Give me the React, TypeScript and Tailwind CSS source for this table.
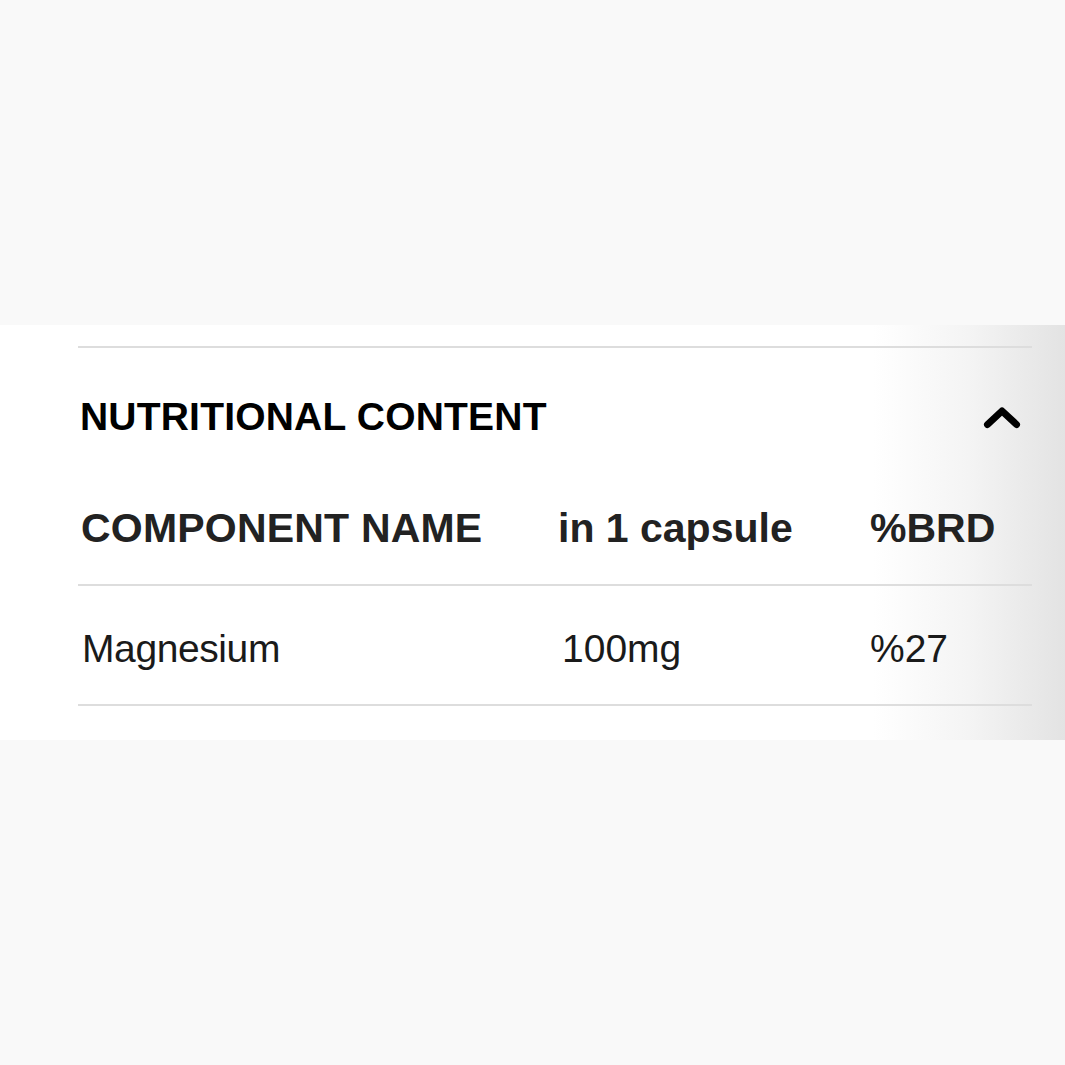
import React from "react";

function Chevron() {
  return (
    <svg width="38" height="26" viewBox="0 0 38 26" fill="none">
      <path d="M4.5 20.5 L19 7 L33.5 20.5" stroke="#000" strokeWidth="7" strokeLinecap="round" strokeLinejoin="round" />
    </svg>
  );
}

export default function App() {
  const font = { fontFamily: '"Liberation Sans", Arial, sans-serif' };
  return (
    <div className="w-[1065px] h-[1065px] bg-[#f9f9f9] flex flex-col" style={font}>
      <div className="h-[325px]" />
      <div className="h-[415px] bg-[linear-gradient(to_right,#ffffff_0%,#ffffff_82%,#f4f4f4_91%,#e3e3e3_100%)] pl-[78px] pr-[33px] pt-[21px]">
        <div className="h-[2px] bg-[#dddddd]" />
        <div className="h-[137px] flex items-center justify-between pl-[2px] pr-[11px]">
          <div className="text-[39px] font-bold tracking-[0.2px] text-black leading-none">NUTRITIONAL CONTENT</div>
          <Chevron />
        </div>
        <div className="h-[99px] flex items-center pb-[12px] text-[41px] font-bold text-[#222] leading-none">
          <div className="w-[480px] pl-[3px] tracking-[0.2px]">COMPONENT NAME</div>
          <div className="w-[312px]">in 1 capsule</div>
          <div>%BRD</div>
        </div>
        <div className="h-[2px] bg-[#dddddd]" />
        <div className="h-[118px] flex items-center text-[39px] text-[#1a1a1a] leading-none pt-[6px]">
          <div className="w-[480px] pl-[4px] tracking-[-0.4px]">Magnesium</div>
          <div className="w-[312px] pl-[4px]">100mg</div>
          <div>%27</div>
        </div>
        <div className="h-[2px] bg-[#dddddd]" />
      </div>
    </div>
  );
}
